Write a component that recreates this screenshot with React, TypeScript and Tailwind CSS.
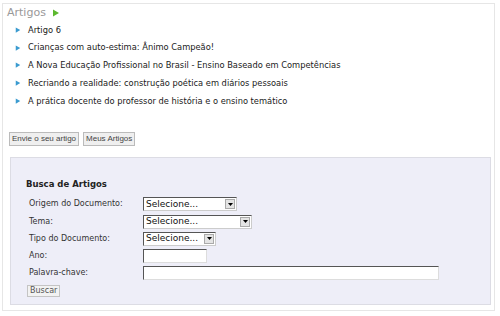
import React from 'react';

const artigos = [
  'Artigo 6',
  'Crianças com auto-estima: Ânimo Campeão!',
  'A Nova Educação Profissional no Brasil - Ensino Baseado em Competências',
  'Recriando a realidade: construção poética em diários pessoais',
  'A prática docente do professor de história e o ensino temático',
];

const Bullet = ({ color, size }: { color: string; size: number }) => (
  <svg width={size} height={size} viewBox="0 0 8 8">
    <polygon points="1,0.5 7,4 1,7.5" fill={color} />
  </svg>
);

const FakeSelect = ({ width }: { width: string }) => (
  <div className={`${width} h-[14px] flex items-center bg-white border border-t-[#555] border-l-[#555] border-b-[#ccc] border-r-[#ccc]`}>
    <span className="flex-1 pl-[2px] text-[9px] leading-none text-[#111]">Selecione...</span>
    <span className="w-[10px] h-[10px] mr-[1px] flex items-center justify-center bg-[#e4e4e4] border border-[#aaa]">
      <svg width="5" height="3" viewBox="0 0 5 3">
        <polygon points="0,0 5,0 2.5,3" fill="#000" />
      </svg>
    </span>
  </div>
);

const FakeInput = ({ width }: { width: string }) => (
  <div className={`${width} h-[14px] bg-white border border-t-[#555] border-l-[#555] border-b-[#ddd] border-r-[#ddd]`} />
);

const Row = ({ label, children }: { label: string; children: React.ReactNode }) => (
  <div className="flex items-center h-[17.25px]">
    <div className="w-[117px] pl-[3px] text-[8px] text-[#333]">{label}</div>
    {children}
  </div>
);

export default function App() {
  return (
    <div className="w-[500px] h-[316px] bg-white pt-[3px] pl-[2px] font-['DejaVu_Sans',sans-serif]">
      <div className="w-[493px] h-[308px] border border-[#e6e6e6] flex flex-col">
        <div className="flex items-center gap-[6px] pl-[4px] pt-[2px] h-[15px]">
          <span className="text-[11px] leading-none text-[#999]">Artigos</span>
          <Bullet color="#5cb82e" size={8} />
        </div>

        <ul className="mt-[2px]">
          {artigos.map((a) => (
            <li key={a} className="flex items-center h-[17.75px] pl-[12px]">
              <Bullet color="#3b9bd0" size={6} />
              <span className="ml-[7px] text-[8.3px] text-[#1a1a1a]">{a}</span>
            </li>
          ))}
        </ul>

        <div className="flex gap-[4px] mt-[22px] pl-[6px]">
          <button className="h-[14px] px-[2px] bg-[#efefef] border border-[#bbb] text-[8px] leading-none text-[#444] font-['Liberation_Sans',sans-serif]">
            Envie o seu artigo
          </button>
          <button className="h-[14px] px-[2px] bg-[#efefef] border border-[#bbb] text-[8px] leading-none text-[#444] font-['Liberation_Sans',sans-serif]">
            Meus Artigos
          </button>
        </div>

        <div className="mt-[11px] ml-[7px] w-[481px] h-[148px] bg-[#eeeef8] border border-[#dcdce4] pl-[15px] pt-[20px]">
          <div className="text-[8.5px] leading-[12px] font-bold text-[#222]">Busca de Artigos</div>
          <div className="mt-[6px]">
            <Row label="Origem do Documento:">
              <FakeSelect width="w-[94px]" />
            </Row>
            <Row label="Tema:">
              <FakeSelect width="w-[109px]" />
            </Row>
            <Row label="Tipo do Documento:">
              <FakeSelect width="w-[73px]" />
            </Row>
            <Row label="Ano:">
              <FakeInput width="w-[64px]" />
            </Row>
            <Row label="Palavra-chave:">
              <FakeInput width="w-[296px]" />
            </Row>
          </div>
          <div className="flex mt-[3px] ml-[1px]">
            <button className="h-[12px] px-[2px] bg-[#f2f2f2] border border-[#c4c4c4] text-[8px] leading-none text-[#555]">
              Buscar
            </button>
          </div>
        </div>
      </div>
    </div>
  );
}
